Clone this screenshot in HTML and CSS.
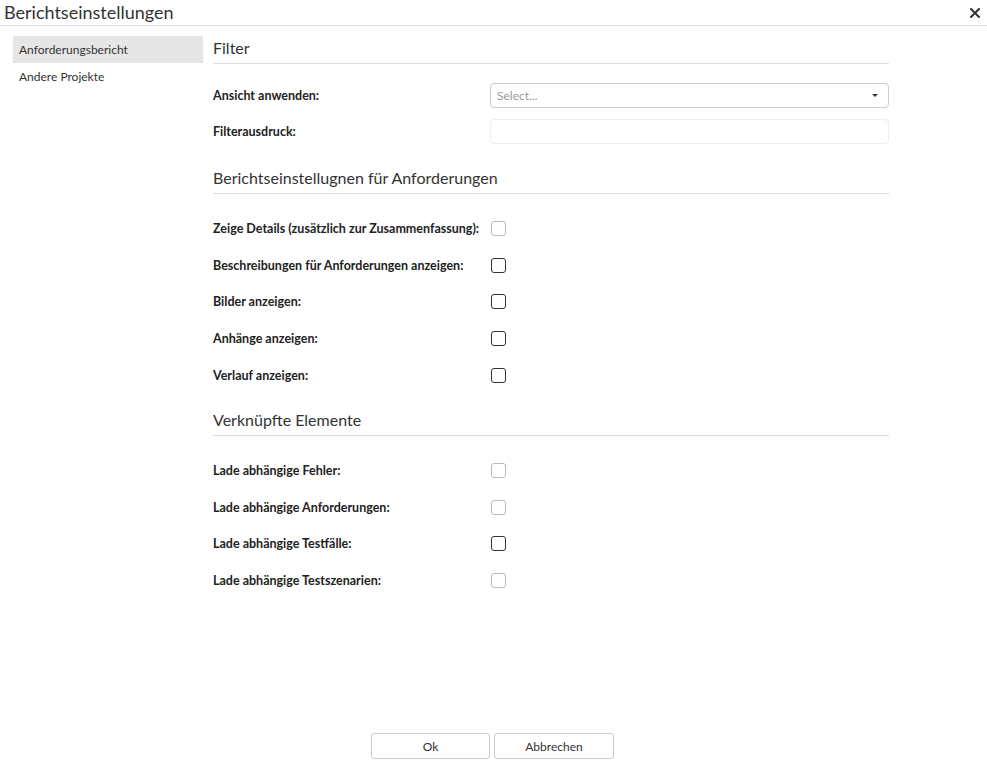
FILE: index.html
```html
<!DOCTYPE html>
<html lang="de">
<head>
    <meta charset="UTF-8">
    <meta name="viewport" content="width=device-width, initial-scale=1.0">
    <title>Berichtseinstellungen</title>
    <link rel="stylesheet" href="styles.css">
</head>
<body>
    <div class="dialog">
        <div class="dialog-header">
            <span class="dialog-title">Berichtseinstellungen</span>
            <button class="close-btn" title="Schließen">
                <svg width="10" height="10" viewBox="0 0 10 10">
                    <path d="M1 1 L9 9 M9 1 L1 9" stroke="#333" stroke-width="2" stroke-linecap="square"/>
                </svg>
            </button>
        </div>

        <div class="dialog-body">
            <ul class="side-nav">
                <li class="active">Anforderungsbericht</li>
                <li>Andere Projekte</li>
            </ul>

            <div class="content">
                <h2 class="section-title first">Filter</h2>
                <div class="field-row field-select">
                    <label>Ansicht anwenden:</label>
                    <div class="select">
                        <span class="placeholder">Select...</span>
                        <span class="caret"></span>
                    </div>
                </div>
                <div class="field-row field-input">
                    <label for="filter">Filterausdruck:</label>
                    <input type="text" id="filter" class="text-input">
                </div>

                <h2 class="section-title second">Berichtseinstellugnen für Anforderungen</h2>
                <div class="check-list list-report">
                    <div class="check-row">
                        <label>Zeige Details (zusätzlich zur Zusammenfassung):</label>
                        <span class="checkbox light"></span>
                    </div>
                    <div class="check-row">
                        <label>Beschreibungen für Anforderungen anzeigen:</label>
                        <span class="checkbox"></span>
                    </div>
                    <div class="check-row">
                        <label>Bilder anzeigen:</label>
                        <span class="checkbox"></span>
                    </div>
                    <div class="check-row">
                        <label>Anhänge anzeigen:</label>
                        <span class="checkbox"></span>
                    </div>
                    <div class="check-row">
                        <label>Verlauf anzeigen:</label>
                        <span class="checkbox"></span>
                    </div>
                </div>

                <h2 class="section-title third">Verknüpfte Elemente</h2>
                <div class="check-list list-linked">
                    <div class="check-row">
                        <label>Lade abhängige Fehler:</label>
                        <span class="checkbox light"></span>
                    </div>
                    <div class="check-row">
                        <label>Lade abhängige Anforderungen:</label>
                        <span class="checkbox light"></span>
                    </div>
                    <div class="check-row">
                        <label>Lade abhängige Testfälle:</label>
                        <span class="checkbox"></span>
                    </div>
                    <div class="check-row">
                        <label>Lade abhängige Testszenarien:</label>
                        <span class="checkbox light"></span>
                    </div>
                </div>
            </div>
        </div>

        <div class="dialog-footer">
            <button class="btn">Ok</button>
            <button class="btn btn-wide">Abbrechen</button>
        </div>
    </div>
</body>
</html>
```

FILE: styles.css
```css
html, body {
    margin: 0;
    padding: 0;
    height: 100%;
}
body {
    font-family: Lato, "Open Sans", Arial, sans-serif;
    font-size: 12px;
    color: #333;
    background-color: white;
}
.dialog {
    display: flex;
    flex-direction: column;
    height: 100vh;
}
.dialog-header {
    display: flex;
    justify-content: space-between;
    align-items: center;
    height: 25px;
    border-bottom: 1px solid #ddd;
    padding: 0 6px 0 4px;
}
.dialog-title {
    font-size: 18px;
    line-height: 25px;
    color: #333;
}
.close-btn {
    background: none;
    border: none;
    padding: 0;
    width: 12px;
    height: 12px;
    display: flex;
    align-items: center;
    justify-content: center;
    cursor: pointer;
}
.dialog-body {
    flex: 1;
    display: flex;
    padding: 10px 0 0 13px;
}
.side-nav {
    list-style: none;
    margin: 0;
    padding: 0;
    width: 190px;
}
.side-nav li {
    height: 27px;
    line-height: 27px;
    padding-left: 6px;
    color: #333;
    cursor: pointer;
}
.side-nav li.active {
    background-color: #e6e6e6;
}
.content {
    width: 676px;
    margin-left: 10px;
    padding-top: 1px;
}
.section-title {
    margin: 0;
    font-size: 16px;
    font-weight: normal;
    line-height: 22px;
    padding-bottom: 4px;
    border-bottom: 1px solid #ddd;
    color: #333;
}
.section-title.second {
    margin-top: 23px;
}
.section-title.third {
    margin-top: 15px;
}
.field-row {
    display: flex;
    align-items: center;
}
.field-row label,
.check-row label {
    width: 277px;
    font-size: 12.5px;
    font-weight: bold;
    color: #222;
}
.field-select {
    margin-top: 19px;
}
.field-input {
    margin-top: 11px;
}
.select {
    flex: 1;
    height: 23px;
    border: 1px solid #ccc;
    border-radius: 4px;
    display: flex;
    align-items: center;
    justify-content: space-between;
    padding: 0 10px 0 6px;
}
.placeholder {
    color: #999;
}
.caret {
    width: 0;
    height: 0;
    border-left: 3px solid transparent;
    border-right: 3px solid transparent;
    border-top: 3px solid #333;
}
.text-input {
    flex: 1;
    height: 25px;
    box-sizing: border-box;
    border: 1px solid #eee;
    border-radius: 4px;
    margin: 0;
    padding: 0 6px;
    font: inherit;
}
.list-report {
    margin-top: 16px;
}
.list-linked {
    margin-top: 16px;
}
.check-row {
    display: flex;
    align-items: center;
    height: 36.8px;
}
.checkbox {
    width: 13px;
    height: 13px;
    border: 1px solid #333;
    border-radius: 3px;
    margin-left: 1px;
}
.checkbox.light {
    border-color: #bbb;
}
.dialog-footer {
    display: flex;
    justify-content: center;
    gap: 4px;
    padding: 0 2px 10px 0;
}
.btn {
    width: 119px;
    height: 26px;
    background-color: white;
    border: 1px solid #ccc;
    border-radius: 3px;
    font: inherit;
    color: #333;
    cursor: pointer;
}
.btn-wide {
    width: 120px;
}
.btn:hover {
    background-color: #f2f2f2;
}
```
